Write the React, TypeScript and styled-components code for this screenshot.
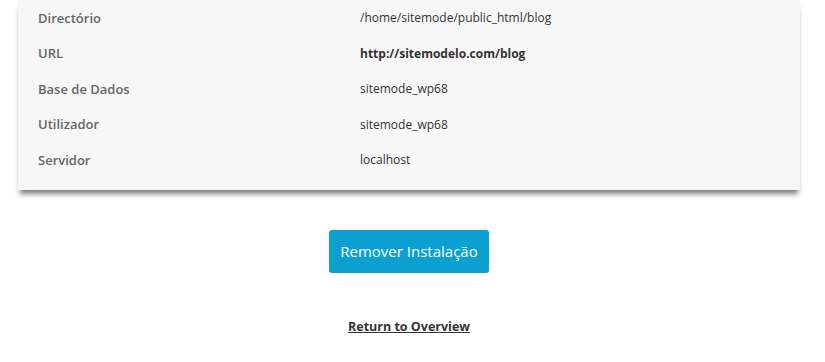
import React from 'react'
import styled, { createGlobalStyle } from 'styled-components'

const GlobalStyle = createGlobalStyle`
  body {
    margin: 0;
    background: #fff;
    font-family: "Open Sans", "Liberation Sans", sans-serif;
  }
`

const Page = styled.div`
  width: 782px;
  padding-left: 18px;
  display: flex;
  flex-direction: column;
  align-items: center;
`

const Panel = styled.div`
  box-sizing: border-box;
  width: 782px;
  padding: 0 20px 12px;
  background: #f7f7f7;
  box-shadow: 0 6px 5px -2px rgba(0, 0, 0, 0.5);
`

const Row = styled.div`
  display: grid;
  grid-template-columns: 322px 1fr;
  height: 35.5px;
  align-items: center;
`

const Label = styled.div`
  color: #666;
  font-size: 13px;
  font-weight: 600;
`

const Value = styled.div<{ $strong?: boolean }>`
  color: #333;
  font-size: 12px;
  font-weight: ${(p) => (p.$strong ? 700 : 400)};
`

const RemoveButton = styled.button`
  margin-top: 40px;
  width: 160px;
  height: 43px;
  border: none;
  border-radius: 3px;
  background: #0ba0d2;
  color: #fff;
  font-family: "Open Sans", "Liberation Sans", sans-serif;
  font-size: 15px;
  cursor: pointer;
`

const BackLink = styled.a`
  margin-top: 45px;
  color: #333;
  font-size: 12.5px;
  font-weight: 700;
  text-decoration: underline;
`

const rows = [
  { label: 'Directório', value: '/home/sitemode/public_html/blog' },
  { label: 'URL', value: 'http://sitemodelo.com/blog', strong: true },
  { label: 'Base de Dados', value: 'sitemode_wp68' },
  { label: 'Utilizador', value: 'sitemode_wp68' },
  { label: 'Servidor', value: 'localhost' },
]

const App = () => {
  return (
    <Page>
      <GlobalStyle />
      <Panel>
        {rows.map((row) => (
          <Row key={row.label}>
            <Label>{row.label}</Label>
            <Value $strong={row.strong}>{row.value}</Value>
          </Row>
        ))}
      </Panel>
      <RemoveButton>Remover Instalação</RemoveButton>
      <BackLink href="#">Return to Overview</BackLink>
    </Page>
  )
}

export default App
